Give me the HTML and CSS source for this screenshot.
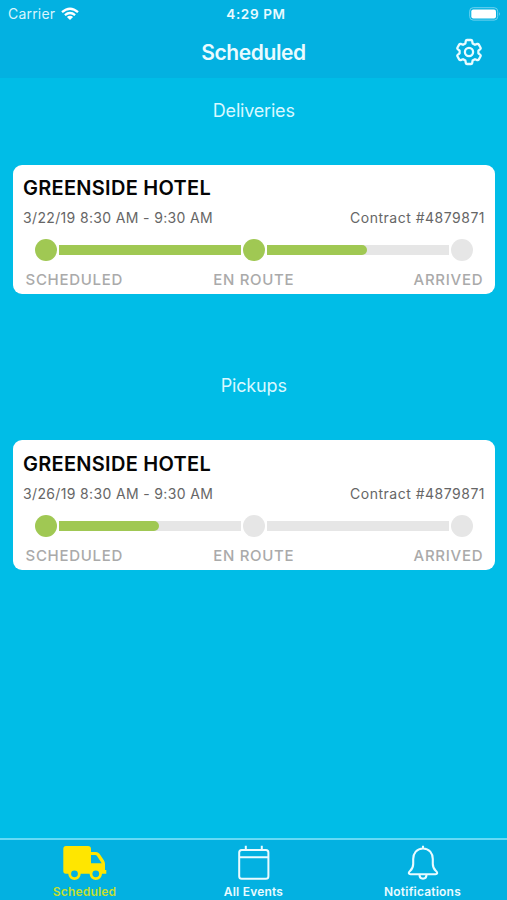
FILE: index.html
```html
<!DOCTYPE html>
<html lang="en">
<head>
<meta charset="utf-8">
<title>Scheduled</title>
<link rel="stylesheet" href="styles.css">
</head>
<body>
<div class="app">
  <header class="header">
    <div class="status">
      <div class="carrier"><span>Carrier</span>
        <svg width="18" height="14" viewBox="0 0 18 14" fill="none" stroke="#fff" stroke-width="2.3"><path d="M1 5.2Q9-1.8 17 5.2M3.9 8.2Q9 3.9 14.1 8.2"/><path d="M5.9 10Q9 7.3 12.1 10L9 13Z" fill="#fff" stroke="none"/></svg>
      </div>
      <span class="time">4:29 PM</span>
      <svg class="battery" width="32" height="14" viewBox="0 0 32 14"><rect x=".7" y=".7" width="28" height="12.4" rx="3.5" fill="none" stroke="#6fd2ef"/><rect x="2.3" y="2.4" width="24.7" height="9" rx="2" fill="#fff"/><path d="M30.2 5q1.6 2 0 4Z" fill="#8bdcf3"/></svg>
    </div>
    <div class="nav">
      <h1>Scheduled</h1>
      <svg class="gear" width="28" height="28" viewBox="0 0 28 28" fill="none" stroke="#e9fbff" stroke-width="2.3" stroke-linejoin="round"><path d="M12 2H16Q17 2 17.2 3L17.6 5.4L20 6.8L22.3 5.9Q23.2 5.6 23.7 6.4L25.6 9.7Q26 10.6 25.3 11.2L23.4 12.7V15.3L25.3 16.8Q26 17.4 25.6 18.3L23.7 21.6Q23.2 22.4 22.3 22.1L20 21.2L17.6 22.6L17.2 25Q17 26 16 26H12Q11 26 10.8 25L10.4 22.6L8 21.2L5.7 22.1Q4.8 22.4 4.3 21.6L2.4 18.3Q2 17.4 2.7 16.8L4.6 15.3V12.7L2.7 11.2Q2 10.6 2.4 9.7L4.3 6.4Q4.8 5.6 5.7 5.9L8 6.8L10.4 5.4L10.8 3Q11 2 12 2Z"/><circle cx="14" cy="14" r="4.1"/></svg>
    </div>
  </header>
  <main>
    <h2>Deliveries</h2>
    <article class="card">
      <h3>GREENSIDE HOTEL</h3>
      <div class="meta"><span class="date">3/22/19 8:30 AM - 9:30 AM</span><span class="contract">Contract #4879871</span></div>
      <div class="track"><i class="dot done"></i><div class="bar full"></div><i class="dot done"></i><div class="bar"><div class="fill"></div></div><i class="dot"></i></div>
      <div class="steps"><span class="s1">SCHEDULED</span><span class="s2">EN ROUTE</span><span class="s3">ARRIVED</span></div>
    </article>
    <h2 class="second">Pickups</h2>
    <article class="card">
      <h3>GREENSIDE HOTEL</h3>
      <div class="meta"><span class="date">3/26/19 8:30 AM - 9:30 AM</span><span class="contract">Contract #4879871</span></div>
      <div class="track"><i class="dot done"></i><div class="bar"><div class="fill"></div></div><i class="dot"></i><div class="bar"></div><i class="dot"></i></div>
      <div class="steps"><span class="s1">SCHEDULED</span><span class="s2">EN ROUTE</span><span class="s3">ARRIVED</span></div>
    </article>
  </main>
  <nav class="tabs">
    <div class="tab active">
      <svg width="44" height="36" viewBox="0 0 44 36"><path fill="#ffe600" fill-rule="evenodd" d="M3 1H25Q28 1 28 4V7H33Q35 7 36.5 8.8L41 15.5Q42 17 42 19V25H43.3V28.8H39A6.2 6.2 0 0 1 26.6 28.8H17.7A6.2 6.2 0 0 1 5.3 28.8H3Q.3 28.8 .3 26V4Q.3 1 3 1ZM28 10V18.3H38.7L34 11Q33.4 10 32.2 10ZM11.5 25.4A3.4 3.4 0 1 0 11.5 32.2 3.4 3.4 0 1 0 11.5 25.4ZM32.8 25.4A3.4 3.4 0 1 0 32.8 32.2 3.4 3.4 0 1 0 32.8 25.4Z"/></svg>
      <span>Scheduled</span>
    </div>
    <div class="tab events">
      <svg width="34" height="36" viewBox="0 0 34 36" fill="none" stroke="#e9fbff" stroke-width="2"><rect x="2.2" y="5" width="29.2" height="28.8" rx="2.5"/><path d="M2 12.2H31.5M8.8 5V.8M24.8 5V.8"/></svg>
      <span>All Events</span>
    </div>
    <div class="tab bell">
      <svg width="32" height="36" viewBox="0 0 32 36" fill="none" stroke="#e9fbff" stroke-width="2.1" stroke-linejoin="round"><path d="M16 3.5C9.7 3.5 6.2 8.5 6.2 14V19C6.2 23.5 4.8 24.5 2.8 26.2C1.2 27.7 1.6 29.2 3.6 29.2H28.4C30.4 29.2 30.8 27.7 29.2 26.2C27.2 24.5 25.8 23.5 25.8 19V14C25.8 8.5 22.3 3.5 16 3.5ZM12.5 29.5C12.5 35 19.5 35 19.5 29.5M16 3.7V.8"/></svg>
      <span>Notifications</span>
    </div>
  </nav>
</div>
</body>
</html>
```
FILE: styles.css
```css
* { box-sizing: border-box; }
body { margin: 0; font-family: Inter, "Liberation Sans", sans-serif; background: #00bde7; }
h1, h2, h3 { margin: 0; }
svg { display: block; flex: none; }
span, h1, h2, h3 { white-space: nowrap; }
.app { width: 507px; height: 900px; display: flex; flex-direction: column; overflow: hidden; }
.header { height: 78px; background: #03b1e1; color: #fff; }
.status { height: 27px; padding: 0 6px 0 8px; display: grid; grid-template-columns: 1fr auto 1fr; align-items: center; }
.carrier { display: flex; align-items: center; gap: 6px; font-size: 14px; letter-spacing: .2px; color: #d9f5fd; }
.time { font-size: 13.5px; font-weight: 600; letter-spacing: .65px; padding-left: 3px; color: #e9fbff; }
.battery { justify-self: end; }
.nav { height: 50px; display: grid; grid-template-columns: 1fr auto 1fr; align-items: center; padding-right: 24px; padding-left: 24px; }
.nav h1 { grid-column: 2; padding-top: 1px; font-size: 21px; line-height: 24px; letter-spacing: -.4px; font-weight: 600; color: #e9fbff; }
.gear { justify-self: end; }
main { flex: 1; padding: 0 12.5px 0 13px; }
h2 { height: 87px; padding-top: 21px; text-align: center; font-size: 18px; line-height: 24px; letter-spacing: -.2px; font-weight: 400; color: #d9f8ff; }
h2.second { height: 146.2px; padding-top: 80px; letter-spacing: -.15px; }
.card { height: 129.3px; background: #fff; border-radius: 9px; padding: 11px 10px 0; }
h3 { font-size: 20px; line-height: 25px; letter-spacing: .28px; font-weight: 600; color: #050505; }
.meta { display: flex; justify-content: space-between; margin-top: 7px; font-size: 14px; line-height: 20px; color: #666; }
.date { letter-spacing: .35px; }
.contract { letter-spacing: .5px; margin-right: -.5px; }
.track { display: flex; align-items: center; gap: 2px; height: 22px; margin: 11px 12px 0 12px; }
.dot { flex: none; width: 22px; height: 22px; border-radius: 50%; background: #e6e6e6; }
.bar { flex: 1; height: 10px; background: #e6e6e6; }
.dot.done, .bar.full, .fill { background: #a0c853; }
.fill { width: 55.2%; height: 10px; border-radius: 0 5px 5px 0; }
.steps { display: grid; grid-template-columns: 1fr auto 1fr; margin: 9px 2px 0; font-size: 15px; line-height: 20px; letter-spacing: .7px; font-weight: 500; color: #aaa; }
.s3 { justify-self: end; margin-right: -.7px; }
.s1 { padding-left: .5px; }
.card:last-child { padding-top: 11.8px; }
.tabs { height: 62px; border-top: 2px solid #66daf5; background: #03b1e1; display: grid; grid-template-columns: repeat(3, 1fr); color: #e9fbff; }
.tab { display: flex; flex-direction: column; align-items: center; padding-top: 5px; font-size: 12px; line-height: 16px; letter-spacing: .2px; font-weight: 600; gap: 3px; }
.tab.active { color: #c4df2f; }
```
